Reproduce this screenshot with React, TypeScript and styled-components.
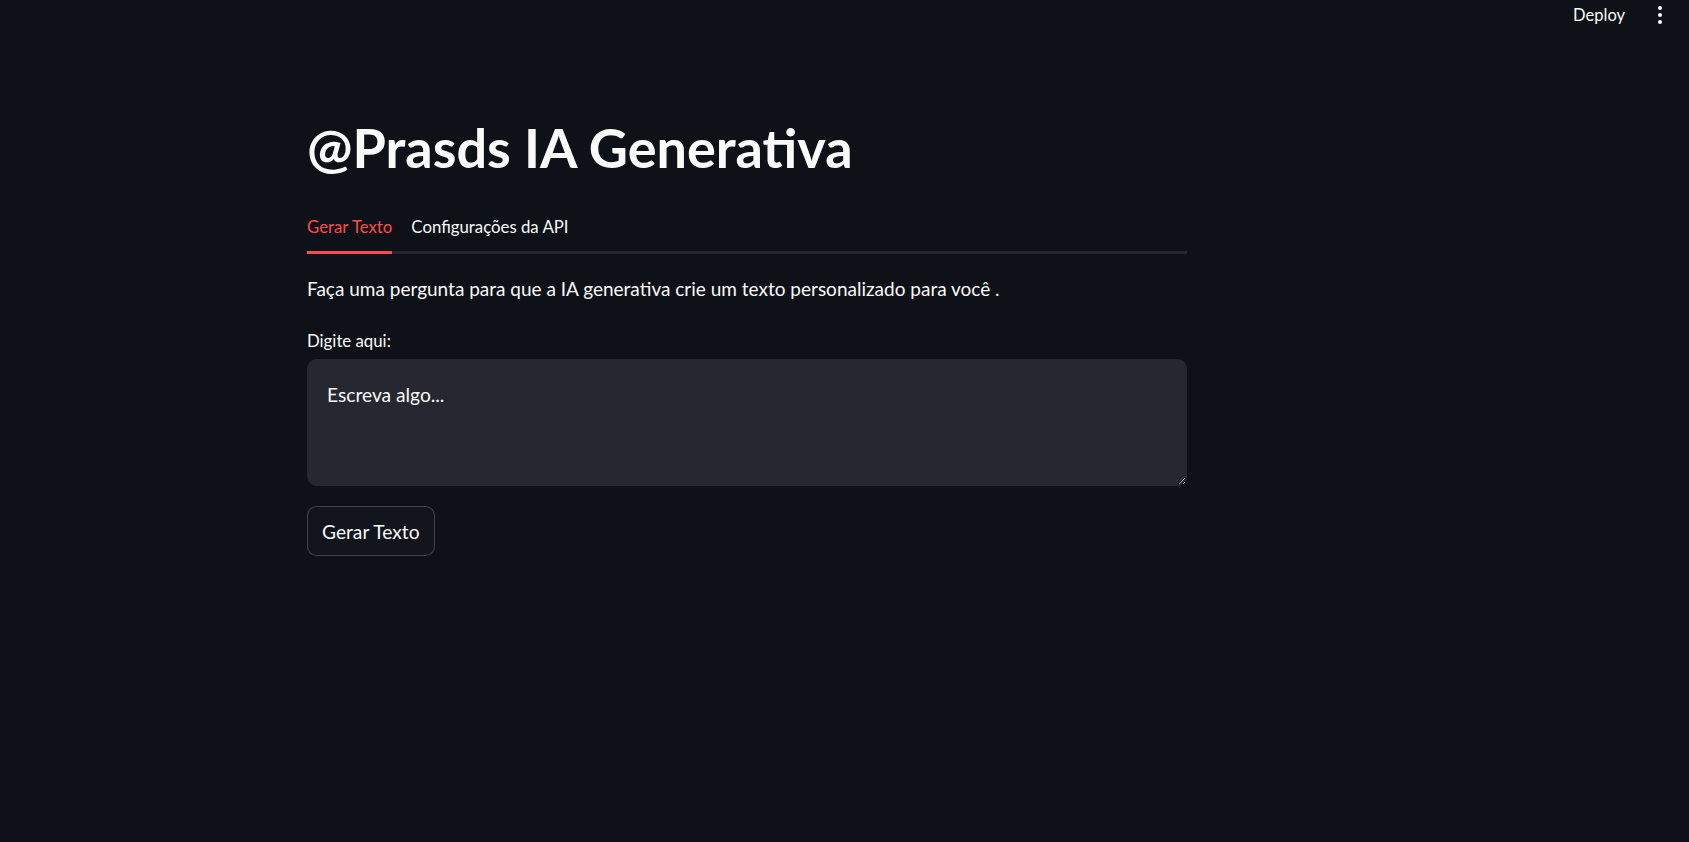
import React from "react";
import styled, { createGlobalStyle } from "styled-components";

const Global = createGlobalStyle`
  html, body { margin: 0; padding: 0; background: #0e1117; }
  body { font-family: Lato, "Liberation Sans", sans-serif; color: #fafafa; }
  * { box-sizing: border-box; }
`;

const Page = styled.div`
  min-height: 842px;
  background: #0e1117;
  display: flex;
  flex-direction: column;
`;

const Header = styled.header`
  height: 30px;
  display: flex;
  justify-content: flex-end;
  align-items: center;
  padding-right: 27px;
  gap: 33px;
`;

const DeployButton = styled.button`
  background: transparent;
  border: none;
  color: #fafafa;
  font-family: inherit;
  font-size: 16.5px;
  padding: 0;
  cursor: pointer;
`;

const Kebab = styled.div`
  display: flex;
  flex-direction: column;
  gap: 3px;
  align-items: center;
`;

const Dot = styled.span`
  width: 4px;
  height: 4px;
  border-radius: 50%;
  background: #fafafa;
`;

const Main = styled.main`
  width: 880px;
  margin-left: 307px;
  padding-top: 86px;
  display: flex;
  flex-direction: column;
`;

const Title = styled.h1`
  margin: 0;
  font-size: 54px;
  font-weight: 700;
  line-height: 1.2;
`;

const TabList = styled.div`
  margin-top: 35px;
  display: flex;
  gap: 19px;
  border-bottom: 3px solid #262730;
`;

const Tab = styled.div<{ $active?: boolean }>`
  font-size: 16.8px;
  padding-bottom: 14px;
  color: ${(p) => (p.$active ? "#ff4b4b" : "#fafafa")};
  margin-bottom: -3px;
  border-bottom: 3px solid ${(p) => (p.$active ? "#ff4b4b" : "transparent")};
`;

const Paragraph = styled.p`
  margin: 20px 0 0;
  font-size: 19px;
  line-height: 1.6;
`;

const Label = styled.label`
  margin-top: 24px;
  font-size: 16.8px;
  line-height: 1.6;
  display: block;
`;

const TextArea = styled.textarea`
  margin-top: 4px;
  height: 127px;
  width: 100%;
  background: #262730;
  border: 1px solid #262730;
  border-radius: 9.6px;
  color: #fafafa;
  font-family: inherit;
  font-size: 19.2px;
  line-height: 1.6;
  padding: 20px 19px 16px;
  outline: none;
  resize: vertical;
  &::placeholder { color: #fafafa; opacity: 1; }
`;

const Button = styled.button`
  margin-top: 20px;
  align-self: flex-start;
  height: 50px;
  padding: 0 14px;
  background: #12151c;
  border: 1px solid rgba(250, 250, 250, 0.2);
  border-radius: 9.6px;
  color: #fafafa;
  font-family: inherit;
  font-size: 19.2px;
  cursor: pointer;
`;

export default function App() {
  return (
    <Page>
      <Global />
      <Header>
        <DeployButton>Deploy</DeployButton>
        <Kebab>
          <Dot />
          <Dot />
          <Dot />
        </Kebab>
      </Header>
      <Main>
        <Title>@Prasds IA Generativa</Title>
        <TabList>
          <Tab $active>Gerar Texto</Tab>
          <Tab>Configurações da API</Tab>
        </TabList>
        <Paragraph>
          Faça uma pergunta para que a IA generativa crie um texto personalizado para você .
        </Paragraph>
        <Label>Digite aqui:</Label>
        <TextArea placeholder="Escreva algo..." />
        <Button>Gerar Texto</Button>
      </Main>
    </Page>
  );
}
